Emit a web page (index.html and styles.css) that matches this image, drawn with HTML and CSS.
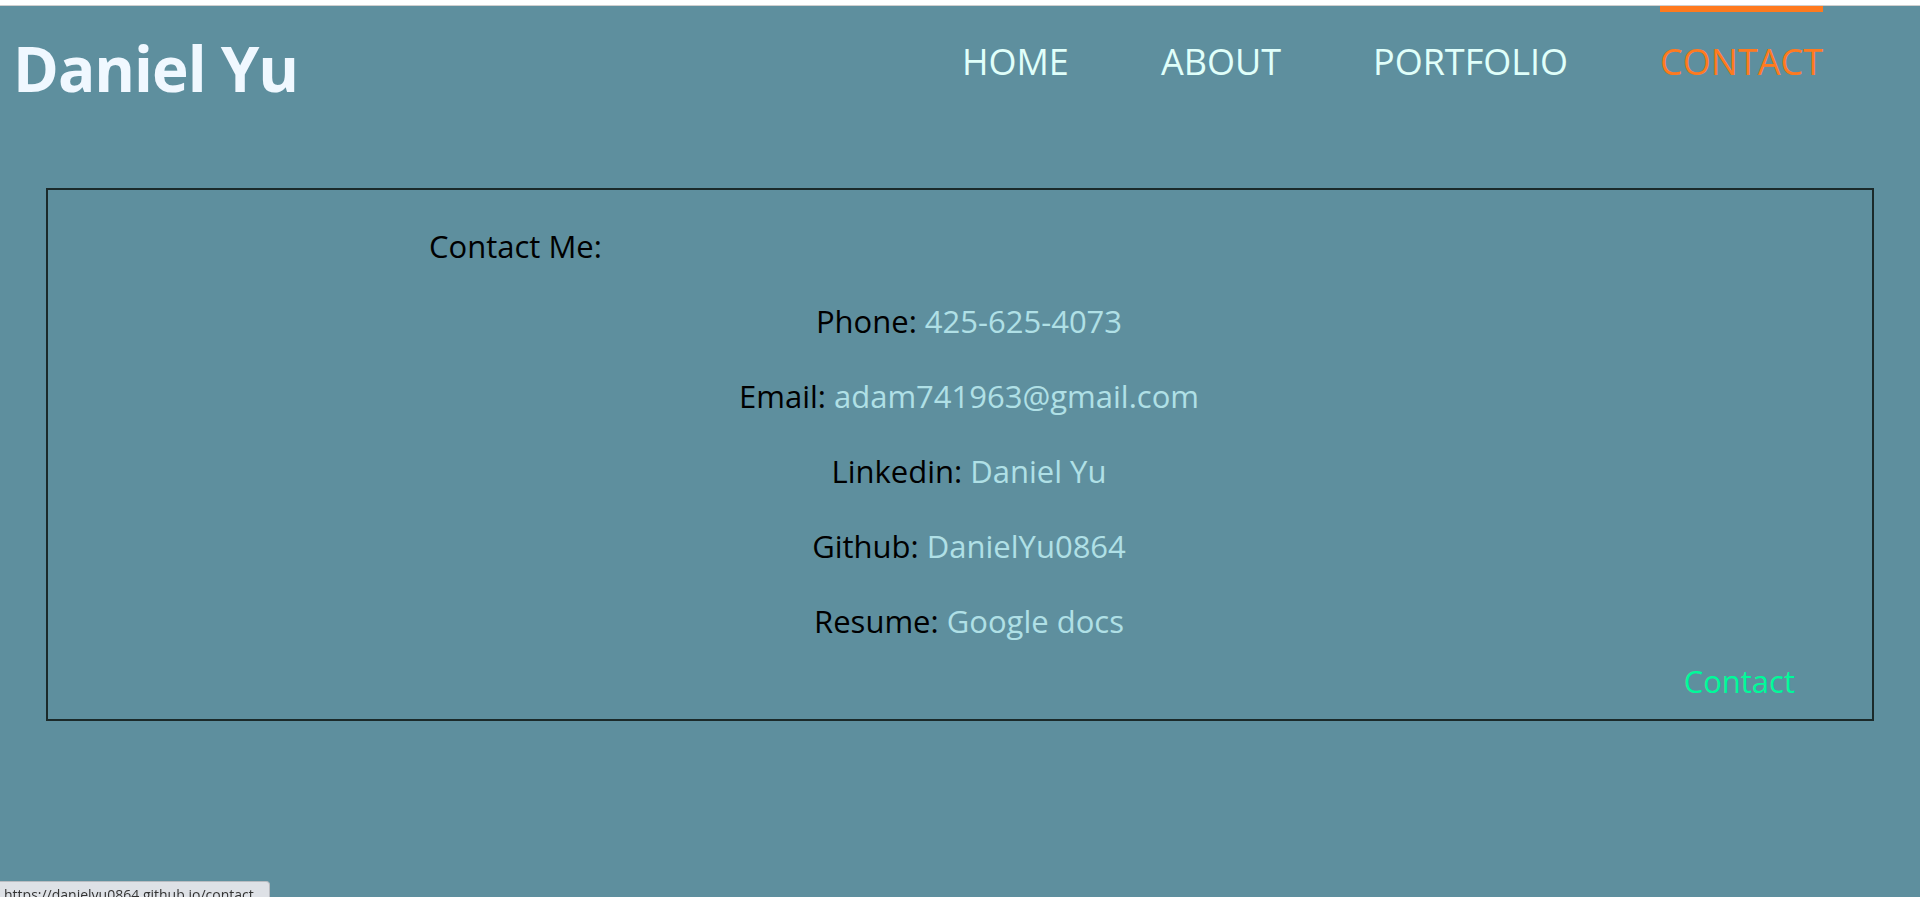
FILE: index.html
```html
<!DOCTYPE html>
<html lang="en">
<head>
<meta charset="utf-8">
<title>Daniel Yu - Contact</title>
<link rel="stylesheet" href="styles.css">
</head>
<body>
<div class="top-strip"></div>
<header class="site-header">
  <h1 class="brand">Daniel Yu</h1>
  <nav class="main-nav">
    <ul class="nav-list">
      <li><a class="nav-link" href="#">HOME</a></li>
      <li><a class="nav-link" href="#">ABOUT</a></li>
      <li><a class="nav-link" href="#">PORTFOLIO</a></li>
      <li><a class="nav-link active" href="#">CONTACT</a></li>
    </ul>
  </nav>
</header>
<main class="content">
  <section class="contact-card">
    <h2 class="contact-title">Contact Me:</h2>
    <ul class="contact-list">
      <li>Phone: <a class="contact-link" href="#">425-625-4073</a></li>
      <li>Email: <a class="contact-link" href="#">adam741963@gmail.com</a></li>
      <li>Linkedin: <a class="contact-link" href="#">Daniel Yu</a></li>
      <li>Github: <a class="contact-link" href="#">DanielYu0864</a></li>
      <li>Resume: <a class="contact-link" href="#">Google docs</a></li>
    </ul>
    <div class="card-footer"><span class="footer-label">Contact</span></div>
  </section>
</main>
<div class="status-bubble">https://danielyu0864.github.io/contact</div>
</body>
</html>
```
FILE: styles.css
```css
html, body {
  margin: 0;
  padding: 0;
}
body {
  background: #5e8f9e;
  font-family: "Open Sans", "Noto Sans", sans-serif;
  min-height: 897px;
}
.top-strip {
  height: 5px;
  background: #ffffff;
  border-bottom: 1px solid #cfcfcf;
}
.site-header {
  display: flex;
  justify-content: space-between;
  align-items: flex-start;
}
.brand {
  margin: 31px 0 0 13px;
  font-size: 62px;
  line-height: 1;
  font-weight: 700;
  letter-spacing: -1px;
  color: #f0f8ff;
}
.nav-list {
  display: flex;
  gap: 92px;
  list-style: none;
  margin: 0;
  padding: 0 97px 0 0;
}
.nav-link {
  display: block;
  padding-top: 32px;
  border-top: 6px solid transparent;
  font-size: 36px;
  line-height: 1;
  color: #e0fffa;
  text-decoration: none;
}
.nav-link.active {
  color: #ff7a1e;
  border-top-color: #ff7a1e;
}
.content {
  padding-top: 89px;
}
.contact-card {
  width: 95%;
  margin: 0 auto;
  border: 2px solid #1b2a2a;
  padding: 19px 0 15px;
  font-size: 31px;
  color: #000;
}
.contact-title {
  margin: 0;
  padding-left: 381px;
  font-size: 31px;
  font-weight: 400;
  line-height: 75px;
}
.contact-list {
  list-style: none;
  margin: 0;
  padding: 0 0 0 18px;
  text-align: center;
  line-height: 75px;
}
.contact-link {
  color: #b0e0e6;
  text-decoration: none;
}
.card-footer {
  text-align: right;
  padding-right: 77px;
  line-height: 45px;
}
.footer-label {
  color: #00fa9a;
}
.status-bubble {
  position: fixed;
  left: 0;
  bottom: -6px;
  height: 22px;
  padding: 3px 15px 0 4px;
  box-sizing: border-box;
  background: #dee1e6;
  border: 1px solid #b9bcc1;
  border-left: none;
  border-bottom: none;
  border-top-right-radius: 4px;
  font-size: 14px;
  line-height: 19px;
  color: #333;
  white-space: nowrap;
}
```
